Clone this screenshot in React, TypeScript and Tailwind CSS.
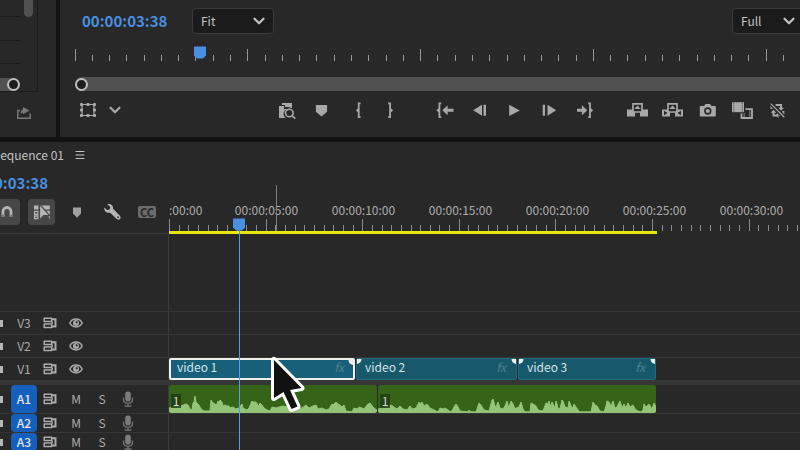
import React from 'react';
import { ChevronDown, Menu } from 'lucide-react';

const range = (n: number) => Array.from({ length: n }, (_, i) => i);

interface IconProps {
  w?: number;
  h?: number;
  className?: string;
  children: React.ReactNode;
}

const Icon: React.FC<IconProps> = ({ w = 20, h = 20, className = '', children }) => (
  <svg width={w} height={h} viewBox={`0 0 ${w} ${h}`} fill="currentColor" className={`shrink-0 ${className}`} aria-hidden="true">
    {children}
  </svg>
);

/* Transport icons */
const FrameSearch = () => (
  <Icon>
    <path d="M5 3h10v5h-1a4.5 4.5 0 0 0-3-1H8V5H5z" />
    <path d="M2 6h5v3h3a5 5 0 0 0-1 9H2z" />
    <circle cx="12.3" cy="13" r="3.8" fill="#282828" stroke="currentColor" strokeWidth="1.6" />
    <path d="m15 15.7 3.3 3" stroke="currentColor" strokeWidth="1.8" />
  </Icon>
);

const Marker = () => (
  <Icon>
    <path d="M4.5 5h10a.6.6 0 0 1 .6.6v6.2L9.500 16.500 3.900 11.800V5.600a.6.6 0 0 1 .6-.6z" />
  </Icon>
);

const MarkIn = () => (
  <Icon>
    <path d="M13.6 3.4h-1.900v13.800h1.900" fill="none" stroke="currentColor" strokeWidth="1.800" />
    <path d="m8.800 10.3 3-2.600v5.200z" />
  </Icon>
);

const MarkOut = () => (
  <Icon>
    <path d="M6.200 3.4h1.900v13.800H6.200" fill="none" stroke="currentColor" strokeWidth="1.800" />
    <path d="m11.200 10.3-3-2.600v5.200z" />
  </Icon>
);

const GoToIn = () => (
  <Icon>
    <path d="M6.2 3.400H4.400v13.800h1.800" fill="none" stroke="currentColor" strokeWidth="1.800" />
    <path d="m1.300 10.300 3-2.600v5.200zM7.300 10.300l5.300-5v3.500h5.900v3h-5.900v3.500z" />
  </Icon>
);

const GoToOut = () => (
  <Icon>
    <path d="M13.2 3.400h1.800v13.800h-1.800" fill="none" stroke="currentColor" strokeWidth="1.800" />
    <path d="m18.200 10.300-3-2.600v5.200zM12.200 10.300l-5.300-5v3.500H2v3h4.900v3.500z" />
  </Icon>
);

const StepBack = () => (
  <Icon>
    <path d="M3.2 10.3 12 4.800v11zM13.500 4.800h2.500v11h-2.500z" />
  </Icon>
);

const Play = () => (
  <Icon>
    <path d="M4.200 4.800v11.200l10.600-5.600z" />
  </Icon>
);

const StepForward = () => (
  <Icon>
    <path d="M16.200 10.3 7.500 4.800v11zM2.700 4.800h2.300v11H2.700z" />
  </Icon>
);

const Lift = () => (
  <Icon w={24}>
    <path d="M1 9.500h8v7H1zM14 9.500h8v7h-8z" />
    <path d="M7 9V3.900h9V12H7z" fill="#282828" stroke="currentColor" strokeWidth="1.700" />
    <path d="m11.500 5.500 3.200 3.500H8.300z" />
  </Icon>
);

const Extract = () => (
  <Icon w={24}>
    <path d="M1 9.500h8v7H1zM14 9.500h8v7h-8z" />
    <path d="M7 9V3.900h9V12H7z" fill="#282828" stroke="currentColor" strokeWidth="1.700" />
    <path d="m11.500 5.500 3.200 3.500H8.300z" />
    <path d="M3 10.700v4.600l3.600-2.300zM20 10.700v4.600L16.400 13z" fill="#282828" />
  </Icon>
);

const Snapshot = () => (
  <Icon>
    <path d="M2.500 6h3.600l1.500-2h4.400l1.500 2h3.600c.5 0 .7.3.7.7v9c0 .4-.3.7-.7.7H2.500c-.5 0-.7-.3-.7-.7v-9c0-.4.3-.7.7-.7z" />
    <circle cx="9.800" cy="11" r="2.900" fill="none" stroke="#282828" strokeWidth="1.600" />
  </Icon>
);

const Compare = () => (
  <Icon w={24}>
    <path d="M1 2.200h12v10H1z" />
    <path d="M2.700 2.700v9.500M11.300 2.700v9.500" stroke="#282828" strokeWidth="0.800" strokeDasharray="1 1" />
    <path d="M14.500 9.100h6.500v8.900H10.500v-4.500" fill="none" stroke="currentColor" strokeWidth="1.800" />
    <path d="M13.200 13.500v4M18.800 9.500v8" stroke="currentColor" strokeWidth="1.400" strokeDasharray="1 1" />
  </Icon>
);

const ProxyOff = () => (
  <Icon>
    <path d="M7.500 5h5.500v3.500M15.300 11v4h-4M3.500 9V6M5.500 11.500v4h3.500" fill="none" stroke="currentColor" strokeWidth="2" />
    <path d="m10.200 7.700 2.900 3 2.900-3zM2.600 12.700l2.900-3 2.900 3zM10.500 12.500 7.700 15.300l2.800 2.700z" />
    <path d="m2.700 3.600 13.600 13.600" stroke="#282828" strokeWidth="4" />
    <path d="m2.700 3.600 13.600 13.600" stroke="currentColor" strokeWidth="1.300" />
  </Icon>
);

const Transform = () => (
  <Icon w={16} h={16}>
    <path d="M2 2.500h12v11H2z" fill="none" stroke="currentColor" strokeWidth="1.200" />
    {[0, 6.5, 13].map((x) =>
      [1, 6.5, 12].map((y) => (x === 6.5 && y === 6.5 ? null : <rect key={`${x}-${y}`} x={x} y={y} width="3" height="3" rx="0.8" />))
    )}
  </Icon>
);

const Export = () => (
  <Icon w={16} h={14}>
    <path d="M4 4.500H1.800v7.700h12.400V7.500" fill="none" stroke="currentColor" strokeWidth="1.500" />
    <path d="M7 1v2.300C5 4 4.500 6.500 4.700 8.500 5.500 7.300 6 6.800 7 6.500v1.700l6.500-3.600z" />
  </Icon>
);

/* Timeline icons */
const Magnet = () => (
  <Icon w={16} h={16}>
    <path d="M4 13V7.500a4 4 0 0 1 8 0V13" fill="none" stroke="currentColor" strokeWidth="2.800" />
    <path d="M2.500 10.700h3V13h-3zM10.500 10.700h3V13h-3z" fill="#7a7a7a" />
  </Icon>
);

const LinkedSelection = () => (
  <Icon w={18} h={16}>
    <path d="M1 1.500h4.500v4H1zM6.500 1.500h10.300v4H6.500zM13 6.800h3.800v8.700z" />
    <path d="M1.600 7.400h3.300v3H1.600zM1.600 12h3.300v2.600H1.600z" fill="none" stroke="currentColor" strokeWidth="1.300" />
    <path d="M6.500 0v16l4.200-4.300h6z" stroke="#474747" strokeWidth="1.200" />
  </Icon>
);

const Wrench = () => (
  <Icon w={18} h={18}>
    <path d="M4.300 1.200c3.100-.7 6.200 1.200 5.800 4.600l6.600 6.600c1.300 1.300 1 2.900.3 3.600-.8.8-2.400 1-3.600-.2L7.100 9.700C3.900 10.500 1 8.200 1.200 4.400l2.900 2.600 2.500-.6.700-2.300z" />
    <circle cx="15" cy="14.200" r="0.900" fill="#282828" />
  </Icon>
);

const Sync = () => (
  <Icon w={14} h={12}>
    <path d="M1.200 1.200h7.500v3.300H1.200zM1.200 7h7.500v3.500H1.200z" fill="none" stroke="currentColor" strokeWidth="1.500" strokeLinejoin="round" />
    <path d="M8.500 2.300h4v7.200h-4M8.500 5.800H10" fill="none" stroke="currentColor" strokeWidth="2" />
  </Icon>
);

const Eye = () => (
  <Icon w={14} h={12}>
    <path d="M.8 6C3.500.8 10.500.8 13.200 6 10.500 11.200 3.500 11.200.8 6z" fill="none" stroke="currentColor" strokeWidth="1.500" />
    <circle cx="7" cy="6" r="3" />
    <circle cx="7.700" cy="5.300" r="1.100" fill="#282828" />
  </Icon>
);

const Mic = () => (
  <Icon w={12} h={16} className="text-[#7c7c7c]">
    <rect x="3.200" y="0.500" width="5.600" height="10" rx="2.800" />
    <path d="M1.500 6.500v2c0 5 9 5 9 0v-2M6 12.500V15M2.500 15.200h7" fill="none" stroke="currentColor" strokeWidth="1.200" />
  </Icon>
);

const Playhead = ({ className }: { className: string }) => (
  <Icon w={12} h={13} className={className}>
    <path d="M0 .5h12v9L9 12.500H3L0 9.500z" />
  </Icon>
);

interface DropdownProps {
  label: string;
  options: string[];
  width: string;
}

const Dropdown: React.FC<DropdownProps> = ({ label, options, width }) => (
  <div className={`grid shrink-0 items-center ${width}`}>
    <select
      aria-label={label}
      className="col-start-1 row-start-1 h-[26px] appearance-none rounded border border-[#3b3b3b] bg-[#1b1b1b] pl-2 text-xs text-[#c4c4c4]"
    >
      {options.map((option) => (
        <option key={option}>{option}</option>
      ))}
    </select>
    <ChevronDown size={18} strokeWidth={3} className="pointer-events-none col-start-1 row-start-1 mr-[6px] justify-self-end text-[#c4c4c4]" />
  </div>
);

const transportGroups = [
  [
    { name: 'Find frame', icon: <FrameSearch /> },
    { name: 'Add marker', icon: <Marker /> },
    { name: 'Mark in', icon: <MarkIn /> },
    { name: 'Mark out', icon: <MarkOut /> },
  ],
  [
    { name: 'Go to in', icon: <GoToIn /> },
    { name: 'Step back', icon: <StepBack /> },
    { name: 'Play', icon: <Play /> },
    { name: 'Step forward', icon: <StepForward /> },
    { name: 'Go to out', icon: <GoToOut /> },
  ],
  [
    { name: 'Lift', icon: <Lift /> },
    { name: 'Extract', icon: <Extract /> },
    { name: 'Export frame', icon: <Snapshot /> },
    { name: 'Comparison view', icon: <Compare /> },
    { name: 'Toggle proxies', icon: <ProxyOff /> },
  ],
];

const SidePanel = () => (
  <aside className="flex w-14 shrink-0 flex-col bg-[#282828]">
    <div className="flex h-[92px] w-[38px] flex-col border-r border-b border-[#1b1b1b]">
      <div className="flex flex-1">
        <div className="w-5">
          <div className="h-[17px] border-b border-[#1b1b1b]" />
          <div className="h-6 border-b border-[#1b1b1b]" />
          <div className="h-[23px] border-b border-[#1b1b1b]" />
        </div>
        <div className="ml-1 h-[17px] w-[9px] rounded-b-full bg-[#515151]" />
      </div>
      <div className="flex h-[13px] w-5 justify-end rounded-r-full bg-[#515151]">
        <span className="size-[13px] rounded-full border-2 border-[#bdbdbd] bg-[#1d1d1d]" />
      </div>
    </div>
    <button aria-label="Export" className="mt-[14px] ml-4 w-4 text-[#787878]">
      <Export />
    </button>
  </aside>
);

const Monitor = () => (
  <section className="flex min-w-0 flex-1 flex-col overflow-hidden bg-[#282828]">
    <div className="flex h-[42px] shrink-0 items-center pl-[22px]">
      <span className="w-[110px] text-[15px] font-bold text-[#4a90e0]">00:00:03:38</span>
      <Dropdown label="Zoom level" options={['Fit', '50%', '100%']} width="w-[82px]" />
      <div className="-mr-1 ml-auto">
        <Dropdown label="Playback resolution" options={['Full', '1/2', '1/4']} width="w-[72px]" />
      </div>
    </div>

    <div className="relative ml-[15px] h-[35px]">
      <svg width="100%" height="35" aria-hidden="true">
        {range(60).map((i) => (
          <rect key={i} x={Math.floor(i * 17.28)} y={i % 10 === 0 ? 7 : 13} width="1" height={i % 10 === 0 ? 12 : 6} fill="#969696" />
        ))}
      </svg>
      <Playhead className="absolute top-1 left-[119px] text-[#4a90e0]" />
    </div>

    <div className="ml-[15px] flex h-[14px] items-center rounded-l-full bg-[#515151]">
      <span className="size-[13px] rounded-full border-2 border-[#bdbdbd] bg-[#1d1d1d]" />
    </div>

    <div className="flex h-[38px] items-center pl-5 text-[#a8a8a8]">
      <div className="mr-[86px] flex w-[103px] shrink-0 items-center gap-[10px]">
        <button aria-label="Transform">
          <Transform />
        </button>
        <button aria-label="More">
          <ChevronDown size={18} strokeWidth={3} />
        </button>
      </div>
      <div className="flex gap-[18px]">
        {transportGroups.map((group, i) => (
          <div key={i} className="flex">
            {group.map(({ name, icon }) => (
              <button key={name} aria-label={name} className="flex w-[35px] justify-center">
                {icon}
              </button>
            ))}
          </div>
        ))}
      </div>
    </div>
  </section>
);

const timeLabels = ['00:00:05:00', '00:00:10:00', '00:00:15:00', '00:00:20:00', '00:00:25:00', '00:00:30:00'];

const Ruler = () => (
  <div className="flex min-w-0 flex-1 flex-col justify-end overflow-hidden border-l border-[#282828]">
    <div className="flex h-[18px] items-center text-xs text-[#adadad]">
      <span className="w-[49px] shrink-0">:00:00</span>
      {timeLabels.map((label) => (
        <span key={label} className="w-[97px] shrink-0 text-center">
          {label}
        </span>
      ))}
    </div>
    <svg width="100%" height="12" aria-hidden="true">
      {range(100).map((i) => (
        <rect key={i} x={Math.round(i * 9.66)} y={i % 10 === 0 ? 0 : 6} width="1" height={i % 10 === 0 ? 12 : 6} fill="#8c8c8c" />
      ))}
    </svg>
    <div className="h-[3px] w-[488px] bg-[#e8e80c]" />
  </div>
);

/* [x, height] samples, measured from the left edge of each clip */
const waveA: number[][] = [
  [0, 4], [4, 5], [8, 6], [12, 6], [17, 8], [19, 7], [21, 3], [23, 2], [24, 9], [25, 10], [26, 16], [27, 10], [28, 9], [30, 7], [32, 3], [35, 1], [41, 1],
  [42, 12], [43, 10], [46, 8], [47, 7], [48, 8], [49, 11], [50, 9], [51, 12], [53, 10], [54, 6], [56, 7], [58, 6], [60, 6], [61, 4], [64, 5], [67, 3],
  [70, 4], [73, 8], [74, 4], [78, 2], [80, 4], [83, 11], [84, 10], [87, 10], [89, 7], [90, 6], [91, 9], [93, 7], [95, 4], [98, 2], [101, 1], [103, 5], [107, 4],
  [110, 5], [114, 6], [119, 5], [126, 4], [133, 4], [137, 7], [140, 4], [144, 6], [147, 7], [149, 3], [153, 4], [157, 2], [160, 3], [163, 8],
  [164, 7], [167, 10], [169, 8], [171, 7], [173, 5], [175, 7], [177, 1], [183, 0], [185, 4], [188, 3], [190, 5], [193, 4], [195, 3], [199, 8], [201, 9], [204, 5], [206, 3], [208, 2],
];

const waveB: number[][] = [
  [0, 3], [5, 4], [10, 6], [13, 7], [16, 5], [19, 3], [22, 6], [25, 3], [29, 2], [32, 6], [34, 3], [38, 4], [41, 10], [42, 8], [44, 10], [46, 6], [49, 8],
  [52, 4], [56, 2], [60, 0], [62, 4], [65, 3], [67, 4], [70, 2], [73, 0], [75, 3], [76, 5], [78, 8], [80, 5], [82, 1], [90, 0], [91, 2], [93, 0], [98, 0],
  [101, 9], [103, 7], [106, 2], [111, 1], [114, 12], [115, 13], [117, 6], [118, 5], [120, 10], [122, 4], [125, 3], [127, 6], [129, 11], [130, 7], [131, 5], [133, 11], [135, 8],
  [137, 3], [138, 4], [141, 5], [143, 10], [145, 3], [147, 0], [152, 0], [153, 9], [155, 8], [158, 6], [160, 2], [165, 1], [168, 9], [170, 8], [171, 11],
  [173, 4], [174, 10], [177, 4], [178, 11], [180, 4], [182, 3], [184, 12], [185, 11], [187, 5], [190, 4], [191, 11], [193, 6], [195, 4], [196, 8], [198, 5], [200, 2], [202, 0], [213, 0],
  [215, 10], [217, 7], [219, 6], [222, 1], [226, 0], [228, 6], [229, 11], [231, 10], [233, 6], [235, 11], [237, 4], [239, 5], [242, 11], [244, 4], [246, 8], [248, 4],
  [250, 9], [252, 5], [255, 7], [257, 3], [260, 1], [263, 0], [265, 2], [266, 8], [268, 5], [271, 8], [274, 3], [276, 9], [278, 5], [281, 4], [284, 2], [286, 0],
];

const AudioClip = ({ wave, width }: { wave: number[][]; width: string }) => (
  <div className={`relative h-7 shrink-0 overflow-hidden rounded-[2px] border-b border-[#8fc274] bg-[#356418] ${width}`}>
    <svg width="100%" height="27" aria-hidden="true">
      <path
        d={`M0 27 ${wave.map(([x, h]) => `L${x} ${27 - h}`).join(' ')} V27z`}
        fill="#93c478"
        stroke="#93c478"
        strokeWidth="1"
        strokeLinejoin="round"
      />
    </svg>
    <span className="absolute bottom-1 left-[2px] h-[14px] w-[10px] bg-[#1d3b10]/80 text-center text-xs leading-[14px] text-[#d8d8d8]">1</span>
  </div>
);

const Corner = ({ side }: { side: 'left' | 'right' }) => (
  <svg width="5" height="5" viewBox="0 0 5 5" aria-hidden="true" className={`absolute top-0 ${side === 'left' ? 'left-0' : 'right-0'}`}>
    <path d={side === 'left' ? 'M0 0H4.500C4.500 2.500 3 4.500 0 5z' : 'M5 0H.5C.5 2.500 2 4.500 5 5z'} fill="#f0f0ea" />
  </svg>
);

interface VideoClipProps {
  name: string;
  width: string;
  selected?: boolean;
  corners: ('left' | 'right')[];
}

const VideoClip: React.FC<VideoClipProps> = ({ name, width, selected, corners }) => (
  <div
    className={`relative flex h-[22px] shrink-0 justify-between rounded-[2px] text-xs text-[#d3e3e7] ${width}
      ${selected ? 'border-2 border-[#f0f0ea] bg-[#18607a] pr-[9px] pl-[6px] leading-[14px]' : 'border border-[#216b81] bg-[#18586b] pr-[10px] pl-2 leading-4'}
    `}
  >
    <span>{name}</span>
    <span className="text-[#4f8190] italic">fx</span>
    {corners.map((side) => (
      <Corner key={side} side={side} />
    ))}
  </div>
);

interface TrackProps {
  id: string;
  audio?: boolean;
  height: string;
  children?: React.ReactNode;
}

const Track: React.FC<TrackProps> = ({ id, audio, height, children }) => (
  <div className={`flex shrink-0 ${height}`}>
    <div className="grid w-[169px] shrink-0 grid-cols-[11px_26px_26px_26px_26px_26px] items-stretch border-r border-[#3a3a3a] text-xs text-[#ababab]">
      <span className="h-[7px] w-[3px] self-center bg-[#b5b5b5]" />
      <button className={`flex items-center justify-center leading-none ${audio ? 'rounded bg-[#1560bd] font-medium text-[#e4e4e4]' : ''}`}>{id}</button>
      <button aria-label={`${id} sync lock`} className="flex items-center justify-center">
        <Sync />
      </button>
      {audio ? (
        <>
          <button aria-label={`Mute ${id}`} className="leading-none">M</button>
          <button aria-label={`Solo ${id}`} className="leading-none">S</button>
          <button aria-label={`Record ${id}`} className="flex items-center justify-center">
            <Mic />
          </button>
        </>
      ) : (
        <button aria-label={`Toggle ${id} output`} className="flex items-center justify-center">
          <Eye />
        </button>
      )}
    </div>
    <div className="flex min-w-0 flex-1 overflow-hidden">{children}</div>
  </div>
);

const Timeline = () => (
  <section className="relative flex flex-1 flex-col overflow-hidden bg-[#282828]">
    <div className="flex h-[26px] shrink-0 items-center gap-[10px] text-xs text-[#c2c2c2]">
      <h2 className="flex w-16 justify-end overflow-hidden whitespace-nowrap">Sequence 01</h2>
      <button aria-label="Panel menu">
        <Menu size={12} strokeWidth={2} />
      </button>
    </div>

    <div className="flex h-[66px] shrink-0">
      <div className="flex w-[168px] shrink-0 flex-col border-b border-[#3a3a3a]">
        <div className="flex h-[31px] w-12 items-center justify-end overflow-hidden text-[15px] font-bold text-[#4a90e0]">00:00:03:38</div>
        <div className="flex h-[26px] items-center text-[#b5b5b5]">
          <button aria-label="Snap" className="-ml-[6px] flex h-[26px] w-[26px] items-center justify-center rounded bg-[#474747]">
            <Magnet />
          </button>
          <button aria-label="Linked selection" className="ml-2 flex h-[26px] w-[27px] items-center justify-center rounded bg-[#474747]">
            <LinkedSelection />
          </button>
          <button aria-label="Add marker" className="ml-3 text-[#a0a0a0]">
            <Icon>
              <path d="M6 5.500h8v6L10 15.700l-4-4.200z" />
            </Icon>
          </button>
          <button aria-label="Timeline settings" className="ml-4">
            <Wrench />
          </button>
          <button
            aria-label="Captions"
            className="ml-[17px] flex h-3 w-[18px] items-center justify-center rounded-[2px] bg-[#6c6c6c] text-[11px] leading-none font-bold text-[#282828]"
          >
            CC
          </button>
        </div>
      </div>
      <Ruler />
    </div>

    <div className="h-[77px] w-[169px] shrink-0 border-r border-[#3a3a3a]" />
    <Track id="V3" height="h-[23px] border-t border-[#363636]" />
    <Track id="V2" height="h-[23px] border-t border-[#363636]" />
    <Track id="V1" height="h-[23px] border-t border-[#363636]">
      <VideoClip name="video 1" width="w-[186px]" corners={['right']} selected />
      <div className="ml-px flex gap-px">
        <VideoClip name="video 2" width="w-[161px]" corners={['left', 'right']} />
        <VideoClip name="video 3" width="w-[138px]" corners={['left', 'right']} />
      </div>
    </Track>
    <div className="h-[5px] shrink-0 bg-[#363636]" />
    <Track id="A1" audio height="h-7">
      <div className="flex gap-px">
        <AudioClip wave={waveA} width="w-[208px]" />
        <AudioClip wave={waveB} width="w-[278px]" />
      </div>
    </Track>
    <Track id="A2" audio height="h-[19px] border-t border-[#363636]" />
    <Track id="A3" audio height="h-[19px] border-t border-[#363636]" />

    {/* Playhead, hover line and pointer float over the tracks */}
    <div className="absolute top-[43px] left-[276px] h-[46px] w-px bg-[#7d7d7d]" />
    <div className="absolute top-[84px] bottom-0 left-[239px] w-px bg-[#559cf0]" />
    <Playhead className="absolute top-[76px] left-[233px] text-[#4a90e0]" />
    <Icon w={40} h={64} className="absolute top-[211px] left-[269px]">
      <path
        d="M5 7V45L14.500 39L22.500 56L28.500 53.500L21 37L32.500 35z"
        fill="#111"
        stroke="#fff"
        strokeWidth="6"
        strokeLinejoin="round"
        paintOrder="stroke"
      />
    </Icon>
  </section>
);

const App: React.FC = () => {
  return (
    <main className="flex h-screen flex-col overflow-hidden bg-[#121212] font-['Noto_Sans_CJK_SC',sans-serif]">
      <div className="flex h-[137px] shrink-0 gap-1">
        <SidePanel />
        <Monitor />
      </div>
      <div className="h-[5px] shrink-0" />
      <Timeline />
    </main>
  );
};

export default App;
